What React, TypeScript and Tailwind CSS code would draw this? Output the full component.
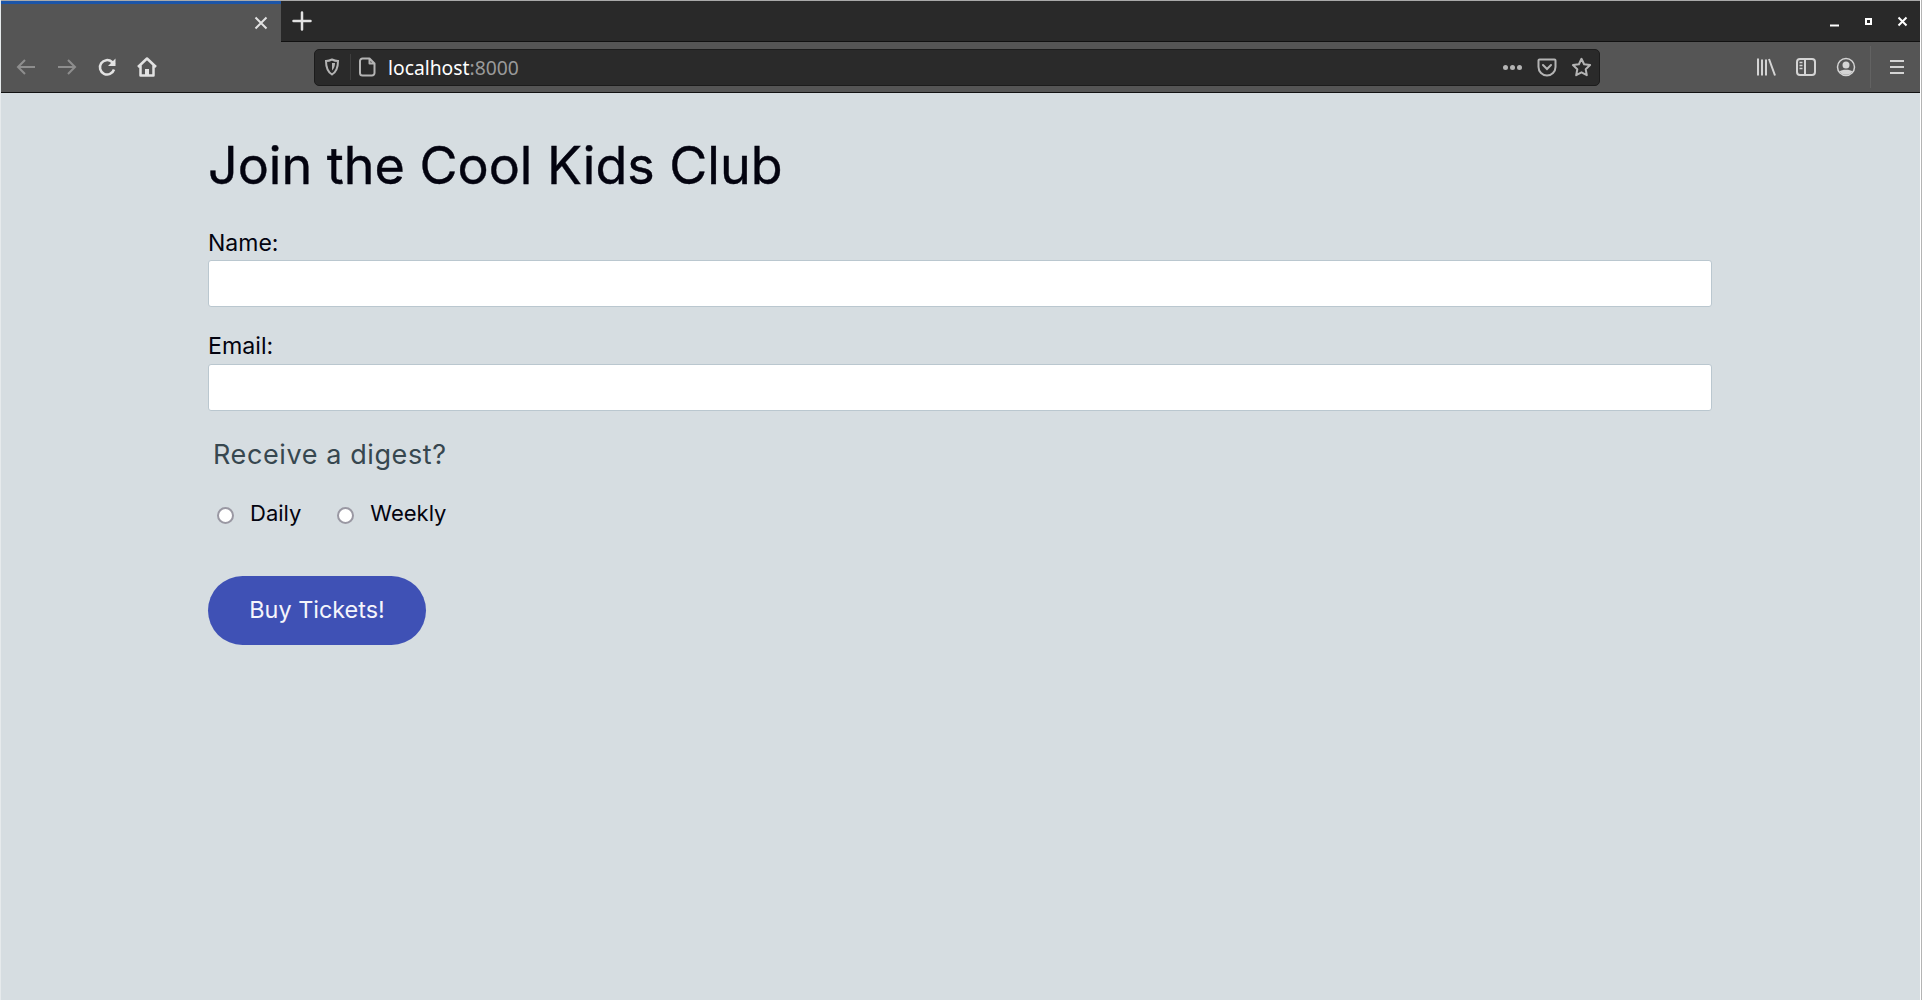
import React from "react";

const iconClass = "fill-none stroke-current stroke-[2]";

function BrowserChrome() {
  return (
    <div className="flex flex-col font-['Noto_Sans',sans-serif]">
      {/* Tab strip */}
      <div className="flex h-[42px] items-stretch border-t border-t-[#a9a9a9] bg-[#292929]">
        <div className="flex w-[280px] items-center justify-end border-t-[3px] border-t-[#1c55a8] bg-[#555555] pr-[12px]">
          <svg width="16" height="16" viewBox="0 0 16 16" className="mb-[1px] text-[#e2e2e2]">
            <path d="M2.5 2.5l11 11M13.5 2.500l-11 11" className={iconClass} />
          </svg>
        </div>
        <div className="flex w-[42px] items-center justify-center border-b border-b-[#111111]">
          <svg width="20" height="20" viewBox="0 0 20 20" className="text-[#e2e2e2]">
            <path d="M10 1.500v17M1.500 10h17" className="fill-none stroke-current stroke-[2.5]" strokeLinecap="round" />
          </svg>
        </div>
        <div className="flex flex-1 items-center justify-end gap-[23px] border-b border-b-[#111111] pr-[12px] pt-[1px]">
          <svg width="11" height="11" viewBox="0 0 11 11" className="text-white">
            <path d="M1 9.500h9" className={iconClass} />
          </svg>
          <svg width="11" height="11" viewBox="0 0 11 11" className="text-white">
            <path d="M3 3h5v5H3z" className={iconClass} />
          </svg>
          <svg width="11" height="11" viewBox="0 0 11 11" className="text-white">
            <path d="M1.500 1.500l8 8M9.500 1.500l-8 8" className={iconClass} />
          </svg>
        </div>
      </div>

      {/* Nav toolbar */}
      <div className="flex h-[51px] items-center border-b border-b-[#111111] bg-[#555555] pl-[15px] pr-[15px]">
        <div className="flex w-[298px] items-center gap-[21px]">
          <svg width="20" height="18" viewBox="0 0 20 18" className="text-[#8e8e8e]">
            <path d="M19 9H2M9 2L2 9l7 7" className={iconClass} />
          </svg>
          <svg width="20" height="18" viewBox="0 0 20 18" className="text-[#8e8e8e]">
            <path d="M1 9h17M11 2l7 7-7 7" className={iconClass} />
          </svg>
          <svg width="20" height="20" viewBox="0 0 20 20" className="ml-[-1px] text-[#e2e2e2]">
            <path d="M17 12.500A7.200 7.200 0 1 1 15 5l2.500 2.500" className="fill-none stroke-current stroke-[2.5]" />
            <path d="M18.500 1.500v7.500H11" className="fill-current stroke-none" />
          </svg>
          <svg width="20" height="20" viewBox="0 0 20 20" className="ml-[-1px] text-[#e2e2e2]">
            <path d="M1 10l9-8.500 9 8.500M3.500 8.500V18.500h13V8.500" className="fill-none stroke-current stroke-[2.5]" strokeLinejoin="round" />
            <path d="M8 18.500v-6.500h4v6.500" className="fill-current stroke-none" />
          </svg>
        </div>

        {/* URL bar */}
        <div className="flex h-[37px] w-[1286px] items-center rounded-[5px] border border-[#1c1c1c] bg-[#2a2a2a] pl-[9px] pr-[7px]">
          <svg width="16" height="18" viewBox="0 0 16 18" className="text-[#b4b4b4]">
            <path d="M8 1.500c2 1 4 1.500 6 1.500 0 6-1 10.500-6 13.500C3 13.500 2 9 2 3c2 0 4-.5 6-1.500z" className={iconClass} />
            <path d="M8 5h3c0 3-1 6-3 7.500z" className="fill-current stroke-none" />
          </svg>
          <div className="ml-[10px] h-[26px] w-px bg-[#3e3e3e]" />
          <svg width="18" height="20" viewBox="0 0 18 20" className="ml-[8px] text-[#b4b4b4]">
            <path d="M3.500 1.500h7l5 5v9.500a2.500 2.500 0 0 1-2.500 2.500H3.500a2.500 2.500 0 0 1-2.500-2.500V4a2.500 2.500 0 0 1 2.500-2.500zM10.500 1.500v5h5" className={iconClass} strokeLinejoin="round" />
          </svg>
          <span className="ml-[11px] pt-[1px] text-[19.3px] leading-none text-white">
            localhost<span className="text-[#9a9a9a]">:8000</span>
          </span>
          <div className="flex-1" />
          <div className="flex items-center gap-[2px]">
            <span className="h-[5px] w-[5px] rounded-full bg-[#b4b4b4]" />
            <span className="h-[5px] w-[5px] rounded-full bg-[#b4b4b4]" />
            <span className="h-[5px] w-[5px] rounded-full bg-[#b4b4b4]" />
          </div>
          <svg width="20" height="19" viewBox="0 0 20 19" className="ml-[15px] text-[#b4b4b4]">
            <path d="M2.500 1.500h15a1 1 0 0 1 1 1V9a8.500 8.500 0 0 1-17 0V2.500a1 1 0 0 1 1-1z" className={iconClass} />
            <path d="M6 7l4 4 4-4" className={iconClass} strokeLinecap="round" />
          </svg>
          <svg width="21" height="20" viewBox="0 0 21 20" className="ml-[14px] text-[#b4b4b4]">
            <path d="M10.500 1.800l2.600 5.500 6 .8-4.400 4.100 1.100 6-5.300-2.900-5.300 2.900 1.100-6L1.900 8.100l6-.8z" className={iconClass} strokeLinejoin="round" />
          </svg>
        </div>

        {/* Right toolbar icons */}
        <div className="flex flex-1 items-center justify-end text-[#d4d4d4]">
          <svg width="20" height="20" viewBox="0 0 20 20">
            <path d="M2 1.500v17M6 2.500v16M10 2.500v16M13 2l6 16.500" className={iconClass} />
          </svg>
          <svg width="20" height="18" viewBox="0 0 20 18" className="ml-[20px]">
            <rect x="1" y="1" width="18" height="16" rx="3" className={iconClass} />
            <path d="M9 1v16" className={iconClass} />
            <path d="M3.500 4.500h3M3.500 7.500h3M3.500 10.500h3" className="fill-none stroke-current stroke-[1.500]" />
          </svg>
          <svg width="20" height="20" viewBox="0 0 20 20" className="ml-[20px]">
            <circle cx="10" cy="10" r="8.500" className="fill-none stroke-current stroke-[1.500]" />
            <circle cx="10" cy="8" r="3.500" className="fill-current" />
            <path d="M3.500 14.500c2-2.500 11-2.500 13 0-1.500 2-4 3.300-6.500 3.300s-5-1.300-6.500-3.300z" className="fill-current" />
          </svg>
          <div className="ml-[14px] h-[42px] w-px bg-[#626262]" />
          <svg width="16" height="16" viewBox="0 0 16 16" className="ml-[18px]">
            <path d="M1 2h14M1 8h14M1 14h14" className={iconClass} />
          </svg>
        </div>
      </div>
    </div>
  );
}

export default function App() {
  return (
    <div className="h-screen overflow-hidden border-r border-r-[#b4b4b4]">
      <div className="flex h-full flex-col border-l border-r border-l-[#e6eaec] border-r-white bg-[#d6dde1] font-['Inter',sans-serif]">
        <BrowserChrome />
        <main className="ml-[207px] flex w-[1504px] flex-col text-[#03030f]">
          <h1 className="mt-[43px] text-[52px] leading-[60px] [-webkit-text-stroke:0.4px_#03030f]">Join the Cool Kids Club</h1>
          <label className="mt-[33px] text-[23px] leading-[29px]">Name:</label>
          <input type="text" className="mt-[2px] h-[47px] w-full rounded-[3px] border border-[#bac7cf] bg-white" />
          <label className="mt-[25px] text-[23.2px] leading-[29px]">Email:</label>
          <input type="text" className="mt-[3px] h-[47px] w-full rounded-[3px] border border-[#bac7cf] bg-white" />
          <div className="ml-[5px] mt-[26px] text-[27px] leading-[36px] tracking-[0.6px] text-[#37474f]">Receive a digest?</div>
          <div className="mt-[26px] flex items-center pl-[9px] text-[22px] leading-[29px]">
            <span className="mt-[3px] h-[17px] w-[17px] rounded-full border-[2.5px] border-[#9a98a3] bg-white" />
            <span className="ml-[16px]">Daily</span>
            <span className="ml-[36px] mt-[3px] h-[17px] w-[17px] rounded-full border-[2.5px] border-[#9a98a3] bg-white" />
            <span className="ml-[16px]">Weekly</span>
          </div>
          <button className="mt-[48px] h-[69px] w-[218px] rounded-[35px] bg-[#3f51b5] pb-[2px] text-[23.4px] text-[#f5f5fb]">Buy Tickets!</button>
        </main>
      </div>
    </div>
  );
}
